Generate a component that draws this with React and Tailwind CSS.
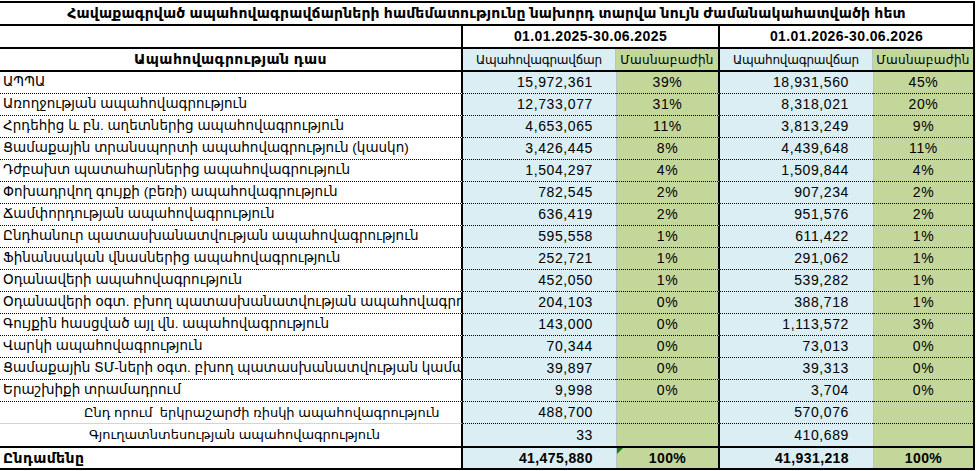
import React from "react";

const rows = [
  ["ԱՊՊԱ", "15,972,361", "39%", "18,931,560", "45%"],
  ["Առողջության ապահովագրություն", "12,733,077", "31%", "8,318,021", "20%"],
  ["Հրդեհից և բն. աղետներից ապահովագրություն", "4,653,065", "11%", "3,813,249", "9%"],
  ["Ցամաքային տրանսպորտի ապահովագրություն (կասկո)", "3,426,445", "8%", "4,439,648", "11%"],
  ["Դժբախտ պատահարներից ապահովագրություն", "1,504,297", "4%", "1,509,844", "4%"],
  ["Փոխադրվող գույքի (բեռի) ապահովագրություն", "782,545", "2%", "907,234", "2%"],
  ["Ճամփորդության ապահովագրություն", "636,419", "2%", "951,576", "2%"],
  ["Ընդհանուր պատասխանատվության ապահովագրություն", "595,558", "1%", "611,422", "1%"],
  ["Ֆինանսական վնասներից ապահովագրություն", "252,721", "1%", "291,062", "1%"],
  ["Օդանավերի ապահովագրություն", "452,050", "1%", "539,282", "1%"],
  ["Օդանավերի օգտ. բխող պատասխանատվության ապահովագրություն", "204,103", "0%", "388,718", "1%"],
  ["Գույքին հասցված այլ վն. ապահովագրություն", "143,000", "0%", "1,113,572", "3%"],
  ["Վարկի ապահովագրություն", "70,344", "0%", "73,013", "0%"],
  ["Ցամաքային ՏՄ-ների օգտ. բխող պատասխանատվության կամավոր ապահովագրություն", "39,897", "0%", "39,313", "0%"],
  ["Երաշխիքի տրամադրում", "9,998", "0%", "3,704", "0%"],
];

// sub rows, indented under the main list
const subRows = [
  ["Ընդ որում  երկրաշարժի ռիսկի ապահովագրություն", "488,700", "570,076", "pl-[84px]"],
  ["Գյուղատնտեսության ապահովագրություն", "33", "410,689", "pl-[89px]"],
];

const font = "font-['Liberation_Sans','DejaVu_Sans',sans-serif]";

export default function App() {
  return (
    <div className={`bg-white w-[976px] h-[471px] pt-px text-black ${font}`}>
      <div className="w-[975px] border-t-2 border-r-2 border-black">
        {/* title */}
        <div className="h-[23px] border-b-2 border-black flex items-center justify-center font-bold text-[14px] tracking-[0.15px]">
          Հավաքագրված ապահովագրավճարների համեմատությունը նախորդ տարվա նույն ժամանակահատվածի հետ
        </div>

        {/* periods */}
        <div className="flex h-[23px] border-b-2 border-black">
          <div className="w-[463px] border-r-2 border-black" />
          <div className="w-[257px] border-r-2 border-black flex items-center justify-center font-bold text-[14px] tracking-[0.4px]">
            01.01.2025-30.06.2025
          </div>
          <div className="w-[253px] flex items-center justify-center font-bold text-[14px] tracking-[0.4px]">
            01.01.2026-30.06.2026
          </div>
        </div>

        {/* column headers */}
        <div className="flex h-[23px] border-b-2 border-black text-[12px]">
          <div className="w-[463px] border-r-2 border-black flex items-center justify-center font-bold text-[14px] tracking-[0.4px]">
            Ապահովագրության դաս
          </div>
          <div className="w-[153px] bg-[#daeef3] border-r border-[#b7c4c8] flex items-center justify-center tracking-[-0.2px]">
            Ապահովագրավճար
          </div>
          <div className="w-[104px] bg-[#c4d79b] border-r-2 border-black flex items-center justify-center tracking-[0.3px]">
            Մասնաբաժին
          </div>
          <div className="w-[153px] bg-[#daeef3] border-r border-[#b7c4c8] flex items-center justify-center tracking-[-0.2px]">
            Ապահովագրավճար
          </div>
          <div className="w-[100px] bg-[#c4d79b] flex items-center justify-center tracking-[0.3px]">
            Մասնաբաժին
          </div>
        </div>

        {/* data */}
        {rows.map((r, i) => (
          <div key={i} className="flex h-[22px] text-[14px] tracking-[0.6px]">
            <div className="w-[463px] border-r-2 border-r-black border-b border-b-black border-dotted [border-right-style:solid] pl-[3px] pr-px flex items-center overflow-hidden whitespace-nowrap text-[13.5px] tracking-normal">
              {r[0]}
            </div>
            <div className="w-[153px] bg-[#daeef3] border-b border-dotted border-black flex items-center justify-end pr-[23px]">
              {r[1]}
            </div>
            <div className="w-[104px] bg-[#c4d79b] border-l border-l-[#b7c4c8] [border-left-style:solid] border-r-2 border-r-black [border-right-style:solid] border-b border-dotted border-b-black flex items-center justify-center">
              {r[2]}
            </div>
            <div className="w-[153px] bg-[#daeef3] border-b border-dotted border-black flex items-center justify-end pr-[24px]">
              {r[3]}
            </div>
            <div className="w-[100px] bg-[#c4d79b] border-l border-l-[#b7c4c8] [border-left-style:solid] border-b border-dotted border-b-black flex items-center justify-center">
              {r[4]}
            </div>
          </div>
        ))}

        {subRows.map((r, i) => (
          <div key={i} className="flex h-[22px] text-[14px] tracking-[0.6px]">
            <div
              className={`w-[463px] border-r-2 border-black flex items-center whitespace-pre text-[13px] tracking-normal ${r[3]} ${
                i === 0 ? "border-b border-b-[#d4d4d4]" : ""
              }`}
            >
              {r[0]}
            </div>
            <div
              className={`w-[153px] bg-[#daeef3] flex items-center justify-end pr-[23px] ${
                i === 0 ? "border-b border-dotted border-black" : ""
              }`}
            >
              {r[1]}
            </div>
            <div
              className={`w-[104px] bg-[#c4d79b] border-l border-l-[#b7c4c8] border-r-2 border-r-black ${
                i === 0 ? "border-b border-b-black [border-bottom-style:dotted]" : ""
              }`}
            />
            <div
              className={`w-[153px] bg-[#daeef3] flex items-center justify-end pr-[24px] ${
                i === 0 ? "border-b border-dotted border-black" : ""
              }`}
            >
              {r[2]}
            </div>
            <div
              className={`w-[100px] bg-[#c4d79b] border-l border-l-[#b7c4c8] ${
                i === 0 ? "border-b border-b-black [border-bottom-style:dotted]" : ""
              }`}
            />
          </div>
        ))}

        {/* total */}
        <div className="flex h-[24px] border-t-2 border-b-2 border-black font-bold text-[14px] tracking-[0.4px]">
          <div className="w-[463px] border-r-2 border-black flex items-center pl-[3px]">Ընդամենը</div>
          <div className="w-[153px] bg-[#daeef3] flex items-center justify-end pr-[23px]">41,475,880</div>
          <div className="relative w-[104px] bg-[#c4d79b] border-l border-[#b7c4c8] border-r-2 border-r-black flex items-center justify-center">
            <svg className="absolute left-0 top-0" width="6" height="6" viewBox="0 0 6 6">
              <polygon points="0,0 6,0 0,6" fill="#1e7b1e" />
            </svg>
            100%
          </div>
          <div className="w-[153px] bg-[#daeef3] flex items-center justify-end pr-[24px]">41,931,218</div>
          <div className="w-[100px] bg-[#c4d79b] border-l border-[#b7c4c8] flex items-center justify-center">100%</div>
        </div>
      </div>
    </div>
  );
}
